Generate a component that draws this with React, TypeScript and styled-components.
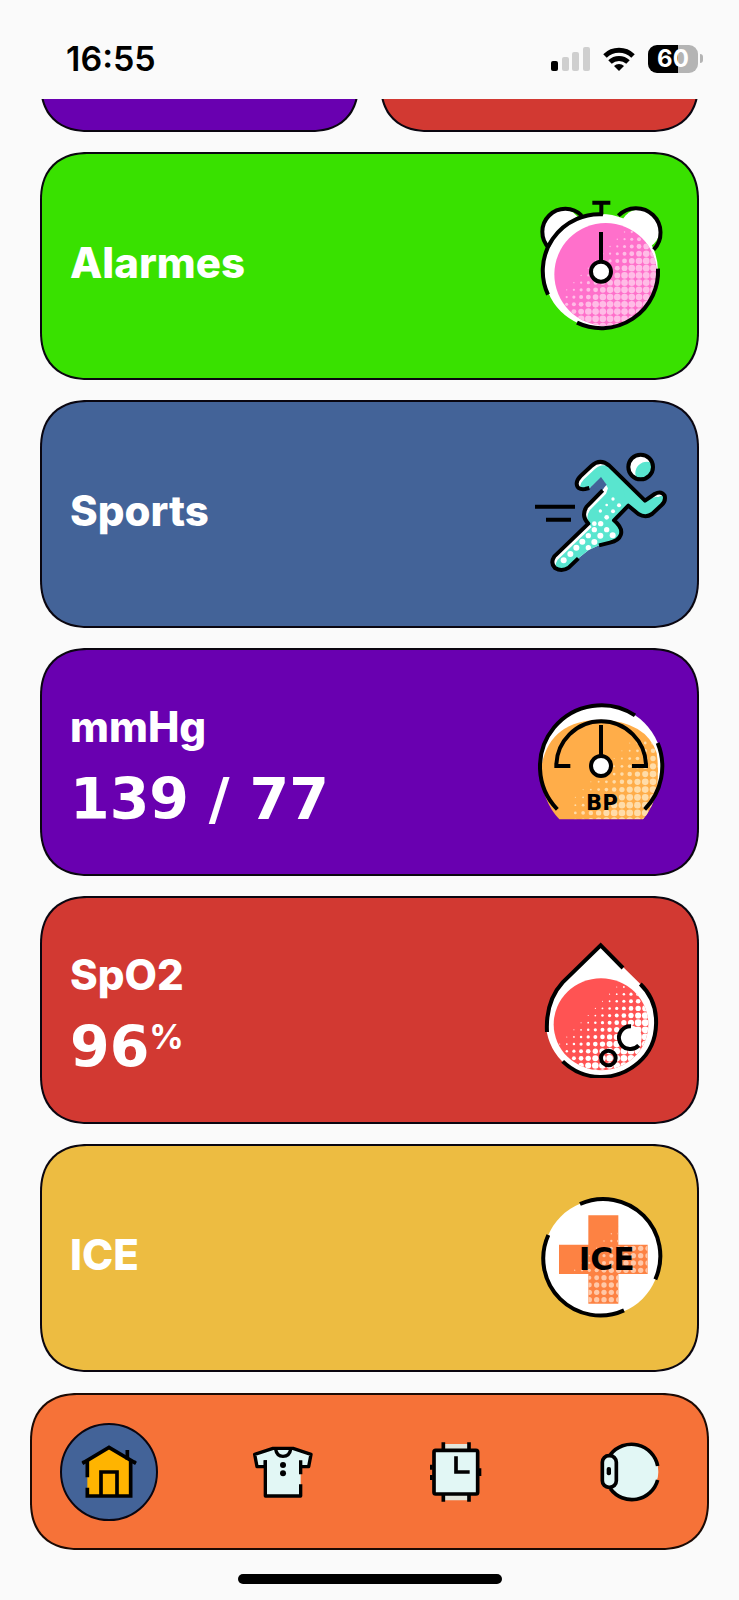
import React from "react";
import styled, { createGlobalStyle } from "styled-components";

const GlobalStyle = createGlobalStyle`
  * { box-sizing: border-box; }
  body {
    margin: 0;
    background: #fafafa;
    font-family: Inter, "Liberation Sans", sans-serif;
  }
  button { font: inherit; color: inherit; margin: 0; cursor: pointer; }
`;

const Screen = styled.div`
  min-height: 100vh;
  display: flex;
  flex-direction: column;
  background: #fafafa;
`;

const StatusBar = styled.header`
  height: 99px;
  padding: 18px 36px 0 66px;
  display: flex;
  align-items: center;
  justify-content: space-between;
`;

const Time = styled.time`
  font-size: 34px;
  line-height: 40px;
  font-weight: 600;
  color: #000;
`;

const Indicators = styled.div`
  display: flex;
  align-items: center;
  gap: 12px;
`;

const Battery = styled.div`
  display: flex;
  align-items: center;
  gap: 2px;
`;

const BatteryBody = styled.div`
  width: 50px;
  height: 28px;
  border-radius: 9px;
  background: linear-gradient(90deg, #000 60%, #b4b4b4 60%);
  color: #fff;
  font-size: 24px;
  line-height: 28px;
  font-weight: 700;
  text-align: center;
`;

const BatteryTip = styled.div`
  width: 3px;
  height: 9px;
  border-radius: 0 3px 3px 0;
  background: #b4b4b4;
`;

const Content = styled.main`
  padding: 0 40px;
  display: flex;
  flex-direction: column;
  gap: 20px;
`;

const ScrolledRow = styled.div`
  height: 33px;
  overflow: hidden;
  display: flex;
  align-items: flex-end;
  gap: 21px;
`;

const Card = styled.button<{ $color: string }>`
  flex: 1 0 auto;
  height: 228px;
  padding: 0 28px;
  display: flex;
  align-items: center;
  justify-content: space-between;
  border: 2px solid #0a0610;
  border-radius: 48px;
  corner-shape: superellipse(1.2);
  background: ${(p) => p.$color};
  color: #fff;
  text-align: left;
`;

const CardText = styled.span`
  display: flex;
  flex-direction: column;
  gap: 24px;
  padding-bottom: 6px;
`;

const CardTitle = styled.span`
  font-size: 42px;
  line-height: 56px;
  font-weight: 800;
`;

const CardValue = styled.span`
  display: flex;
  font-family: "DejaVu Sans", Inter, sans-serif;
  font-size: 57px;
  line-height: 40px;
  font-weight: 700;
  white-space: pre;
`;

const Unit = styled.sup`
  font-family: Inter, sans-serif;
  font-size: 34px;
  line-height: 20px;
  font-weight: 700;
`;

const CardIcon = styled.svg`
  width: 136px;
  height: 136px;
  flex: none;
`;

const NavBar = styled.nav`
  height: 157px;
  margin: 21px 30px 0;
  padding: 0 28px;
  display: flex;
  align-items: center;
  justify-content: space-between;
  border: 2px solid #1c0a04;
  border-radius: 48px;
  corner-shape: superellipse(1.2);
  background: #f67238;
`;

const NavButton = styled.button<{ $active?: boolean }>`
  width: 98px;
  height: 98px;
  padding: 0;
  display: flex;
  align-items: center;
  justify-content: center;
  border: 2px solid ${(p) => (p.$active ? "#0a0610" : "transparent")};
  border-radius: 50%;
  background: ${(p) => (p.$active ? "#436398" : "transparent")};
`;

const NavIcon = styled.svg`
  width: 72px;
  height: 72px;
`;

const HomeIndicator = styled.div`
  width: 264px;
  height: 10px;
  margin: 24px auto 16px;
  border-radius: 5px;
  background: #000;
`;

type HalftoneProps = {
  x: number; y: number; cols: number; rows: number;
  pitch: number; start: number; grow: number; max: number; color: string;
};

/* Dots that grow towards the lower right corner. */
function Halftone({ x, y, cols, rows, pitch, start, grow, max, color }: HalftoneProps) {
  const dots: React.ReactNode[] = [];
  for (let r = 0; r < rows; r++) {
    for (let c = 0; c < cols; c++) {
      const cx = x + c * pitch;
      const cy = y + r * pitch;
      const radius = Math.min(max, (cx + cy - start) * grow);
      if (radius > 1) dots.push(<circle key={`${r}-${c}`} cx={cx} cy={cy} r={radius} />);
    }
  }
  return <g fill={color}>{dots}</g>;
}

const AlarmIcon = () => (
  <CardIcon viewBox="39 54 408 408" fill="none" aria-hidden="true">
    <clipPath id="alarm-face"><circle cx="257" cy="283" r="154" /></clipPath>
    <circle cx="126" cy="148" r="60" fill="#fff" />
    <circle cx="360" cy="148" r="60" fill="#fff" />
    <circle cx="243" cy="273" r="171" fill="#fff" />
    <circle cx="257" cy="283" r="154" fill="#ff70cb" />
    <g clipPath="url(#alarm-face)">
      <Halftone x={140} y={156} cols={14} rows={15} pitch={21.7} start={435} grow={0.06} max={10} color="#ffbce6" />
    </g>
    <g stroke="#000" strokeWidth="12">
      <path d="M87 204 A60 60 0 1 1 185 107" />
      <path d="M295 107 A61 61 0 1 1 401 209" />
      <path d="M84 344 A170 170 0 0 1 249 103" />
      <path d="M414 266 A170 170 0 0 1 171 428" />
      <path d="M217 68 H271 M244 68 V104" />
      <path d="M243 156 V244" />
      <circle cx="243" cy="275" r="30" fill="#fff" />
    </g>
  </CardIcon>
);

const runnerBody =
  "M195 163 Q170 165 170 145 Q171 134 182 123 L214 93 Q240 69 268 92 L375 197 L404 177 Q423 166 434 182 Q438 198 425 210 L396 237 Q377 250 355 237 L325 212 L282 256 Q310 280 302 300 Q296 317 270 323 L237 331 L206 345 L175 370 L146 398 Q125 412 105 399 Q90 384 103 364 L205 266 Q182 242 200 215 L248 166 L254 150 L243 130 L208 160 Z";

const SportsIcon = () => (
  <CardIcon viewBox="39 33 408 408" fill="none" aria-hidden="true">
    <clipPath id="runner-body"><path d={runnerBody} /></clipPath>
    <clipPath id="runner-head"><circle cx="362" cy="96" r="37" /></clipPath>
    <path d={runnerBody} fill="#fff" />
    <g clipPath="url(#runner-body)">
      <path d={runnerBody} fill="#59e5cf" transform="translate(10 10)" />
      <path d="M300 130 L375 194 L410 185 L425 190 L380 235 L320 205 Z" fill="#59e5cf" />
      <g fill="#fff">
        <circle cx="279" cy="192" r="5" /><circle cx="260" cy="210" r="4" />
        <circle cx="297" cy="211" r="6" /><circle cx="241" cy="228" r="5" />
        <circle cx="279" cy="229" r="6" /><circle cx="260" cy="247" r="7" />
        <circle cx="223" cy="266" r="7" /><circle cx="242" cy="266" r="8" />
        <circle cx="223" cy="284" r="8" /><circle cx="260" cy="284" r="8" />
        <circle cx="205" cy="302" r="8" /><circle cx="241" cy="302" r="9" />
        <circle cx="278" cy="301" r="9" /><circle cx="187" cy="320" r="9" />
        <circle cx="223" cy="321" r="9" /><circle cx="169" cy="338" r="9" />
        <circle cx="205" cy="338" r="8" /><circle cx="151" cy="357" r="9" />
        <circle cx="131" cy="376" r="9" />
      </g>
    </g>
    <path d="M243 126 L212 157 L236 164 L249 162 L260 149 Z" fill="#436398" />
    <circle cx="362" cy="96" r="37" fill="#fff" />
    <circle cx="381" cy="115" r="35" fill="#59e5cf" clipPath="url(#runner-head)" />
    <g stroke="#000" strokeWidth="12">
      <circle cx="362" cy="96" r="37" />
      <path d="M45 215 H165 M78 254 H153" />
      <g strokeLinejoin="round">
        <path d="M208 159 L195 162 Q170 165 170 145 Q171 134 182 123 L214 93 Q240 69 268 92 L375 197 L404 177 Q423 166 434 182 Q438 198 425 210 L396 237 Q377 250 355 237 L325 212 L282 256 Q310 280 302 300 Q296 317 270 323 L237 331" />
        <path d="M175 370 L146 398 Q125 412 105 399 Q90 384 103 364 L205 266 Q182 242 200 215 L248 166" />
      </g>
    </g>
  </CardIcon>
);

const PressureIcon = () => (
  <CardIcon viewBox="39 13 408 408" fill="none" aria-hidden="true">
    <clipPath id="gauge-face"><path d="M118 389 Q66 335 62 245 Q80 92 243 90 Q380 96 410 190 Q428 320 369 389 Z" /></clipPath>
    <path d="M112 359 A184 184 0 1 1 374 359 Z" fill="#fff" />
    <path d="M118 389 Q66 335 62 245 Q80 92 243 90 Q380 96 410 190 Q428 320 369 389 Z" fill="#ffad49" />
    <g clipPath="url(#gauge-face)">
      <Halftone x={166} y={160} cols={12} rows={11} pitch={23.3} start={460} grow={0.055} max={10} color="#ffdca9" />
    </g>
    <g stroke="#000" strokeWidth="12">
      <path d="M112 359 A184 184 0 0 1 345 77" />
      <path d="M413 160 A184 184 0 0 1 374 359" />
      <path d="M151 229 H109 A134 134 0 0 1 378 229 H336" />
      <path d="M243 106 V200" />
      <circle cx="243" cy="229" r="30" fill="#fff" />
    </g>
    <text x="246" y="360" textAnchor="middle" fill="#000" fontFamily='"DejaVu Sans", sans-serif' fontWeight="700" fontSize="64">BP</text>
  </CardIcon>
);

const OxygenIcon = () => (
  <CardIcon viewBox="39 37 408 408" fill="none" aria-hidden="true">
    <clipPath id="drop-fluid"><ellipse cx="243" cy="284" rx="142" ry="138" /></clipPath>
    <path d="M242 46 L361 163 A165 165 0 1 1 128 160 Z" fill="#fff" />
    <ellipse cx="243" cy="284" rx="142" ry="138" fill="#ff5353" />
    <g clipPath="url(#drop-fluid)">
      <Halftone x={119} y={172} cols={14} rows={13} pitch={21.4} start={430} grow={0.05} max={10} color="#fff" />
    </g>
    <circle cx="329" cy="323" r="36" fill="#fff" />
    <g stroke="#000" strokeWidth="12">
      <path d="M309 115 L242 47 L128 158 Q76 215 81 307" />
      <path d="M361 163 C426 225 424 340 355 399 C288 457 191 456 128 395" />
      <path d="M333 290 A34 34 0 1 0 356 347" />
      <circle cx="265" cy="385" r="22" />
    </g>
  </CardIcon>
);

const IceIcon = () => (
  <CardIcon viewBox="39 31 408 408" fill="none" aria-hidden="true">
    <clipPath id="cross"><path d="M205 107 H295 V195 H383 V283 H295 V372 H205 V283 H117 V195 H205 Z" /></clipPath>
    <circle cx="245" cy="234" r="174" fill="#fff" />
    <path d="M205 107 H295 V195 H383 V283 H295 V372 H205 V283 H117 V195 H205 Z" fill="#fd8243" />
    <g clipPath="url(#cross)">
      <Halftone x={142} y={140} cols={12} rows={12} pitch={22} start={400} grow={0.06} max={8} color="#ffc8a8" />
    </g>
    <g stroke="#000" strokeWidth="12">
      <path d="M180 73 A171 171 0 0 1 406 299" />
      <path d="M85 166 A171 171 0 0 0 312 392" />
    </g>
    <text x="260" y="271" textAnchor="middle" fill="#000" fontFamily='"DejaVu Sans", sans-serif' fontWeight="700" fontSize="94">ICE</text>
  </CardIcon>
);

const SignalIcon = () => (
  <svg width="39" height="26" viewBox="0 0 39 26" aria-hidden="true">
    <rect x="0" y="15" width="7" height="10" rx="2" fill="#000" />
    <g fill="#cfcfcf">
      <rect x="11" y="11" width="7" height="14" rx="2" />
      <rect x="21" y="6" width="7" height="19" rx="2" />
      <rect x="32" y="1" width="7" height="24" rx="2" />
    </g>
  </svg>
);

const WifiIcon = () => (
  <svg width="34" height="26" viewBox="0 0 34 26" fill="none" aria-hidden="true">
    <g stroke="#000" strokeWidth="5">
      <path d="M3 10 A20 20 0 0 1 31 10" />
      <path d="M8 16 A13 13 0 0 1 26 16" />
    </g>
    <path d="M17 25 L12 20 A7 7 0 0 1 22 20 Z" fill="#000" />
  </svg>
);

const HouseIcon = () => (
  <NavIcon viewBox="156 167 216 216" fill="none" aria-hidden="true">
    <path d="M199 240 L264 202 L329 238 V346 H199 Z" fill="#ffb400" />
    <g stroke="#000" strokeWidth="11">
      <path d="M184 249 L264 201 L345 249" />
      <path d="M319 209 V238" />
      <path d="M184 245 H204 M324 245 H345" strokeWidth="8" />
      <path d="M199 240 V291 M199 322 V347 H329 V240" />
      <path d="M240 347 V275 H288 V347" />
    </g>
  </NavIcon>
);

const ShirtIcon = () => (
  <NavIcon viewBox="679 167 216 216" fill="none" aria-hidden="true">
    <path d="M702 222 L758 203 H816 L871 222 L864 259 L840 257 V347 H733 V257 L710 259 Z" fill="#e2f7f5" />
    <g stroke="#000" strokeWidth="10" strokeLinejoin="round">
      <path d="M734 240 V259 H709 L702 222 L757 204 H817 L871 222 L864 259 H840 V240" />
      <path d="M765 207 Q768 228 787 228 Q807 228 810 207" />
      <path d="M734 240 V347 H840 V312 M840 282 V255" />
    </g>
    <circle cx="787" cy="254" r="9" fill="#000" />
    <circle cx="787" cy="279" r="9" fill="#000" />
  </NavIcon>
);

const WatchIcon = () => (
  <NavIcon viewBox="154 167 216 216" fill="none" aria-hidden="true">
    <path d="M224 191 H301 V360 H224 Z" fill="#e2e6dc" />
    <rect x="196" y="210" width="131" height="131" rx="5" fill="#e2f7f5" stroke="#000" strokeWidth="11" />
    <g stroke="#000" strokeWidth="11">
      <path d="M224 186 V207 M301 186 V207 M224 344 V364 M301 344 V364" />
      <path d="M262 228 V275 H303" />
      <path d="M188 253 V268 M188 284 V299 M334 264 V287" strokeWidth="8" />
    </g>
  </NavIcon>
);

const RingIcon = () => (
  <NavIcon viewBox="675 167 216 216" fill="none" aria-hidden="true">
    <circle cx="786" cy="275" r="82" fill="#e2f7f5" />
    <g stroke="#000" strokeWidth="11">
      <path d="M724 223 A80 80 0 0 1 866 257" />
      <path d="M866 299 A80 80 0 0 1 724 325" />
      <rect x="700" y="226" width="42" height="95" rx="20" fill="#e2f7f5" />
    </g>
    <rect x="713" y="260" width="13" height="25" rx="6" fill="#000" />
  </NavIcon>
);

type CardEntry = { title: string; color: string; icon: React.ReactNode; value?: string; unit?: string };

const cards: CardEntry[] = [
  { title: "Alarmes", color: "#39e100", icon: <AlarmIcon /> },
  { title: "Sports", color: "#436398", icon: <SportsIcon /> },
  { title: "mmHg", color: "#6900b0", icon: <PressureIcon />, value: "139 / 77" },
  { title: "SpO2", color: "#d23932", icon: <OxygenIcon />, value: "96", unit: "%" },
  { title: "ICE", color: "#edbc41", icon: <IceIcon /> },
];

export default function App() {
  return (
    <Screen>
      <GlobalStyle />
      <StatusBar>
        <Time>16:55</Time>
        <Indicators>
          <SignalIcon />
          <WifiIcon />
          <Battery>
            <BatteryBody>60</BatteryBody>
            <BatteryTip />
          </Battery>
        </Indicators>
      </StatusBar>
      <Content>
        <ScrolledRow>
          <Card $color="#6900b0" aria-label="Left tile" />
          <Card $color="#d23932" aria-label="Right tile" />
        </ScrolledRow>
        {cards.map((card) => (
          <Card key={card.title} $color={card.color}>
            <CardText>
              <CardTitle>{card.title}</CardTitle>
              {card.value && (
                <CardValue>
                  {card.value}
                  {card.unit && <Unit>{card.unit}</Unit>}
                </CardValue>
              )}
            </CardText>
            {card.icon}
          </Card>
        ))}
      </Content>
      <NavBar>
        <NavButton $active aria-label="Home"><HouseIcon /></NavButton>
        <NavButton aria-label="Clothing"><ShirtIcon /></NavButton>
        <NavButton aria-label="Watch"><WatchIcon /></NavButton>
        <NavButton aria-label="Ring"><RingIcon /></NavButton>
      </NavBar>
      <HomeIndicator />
    </Screen>
  );
}
